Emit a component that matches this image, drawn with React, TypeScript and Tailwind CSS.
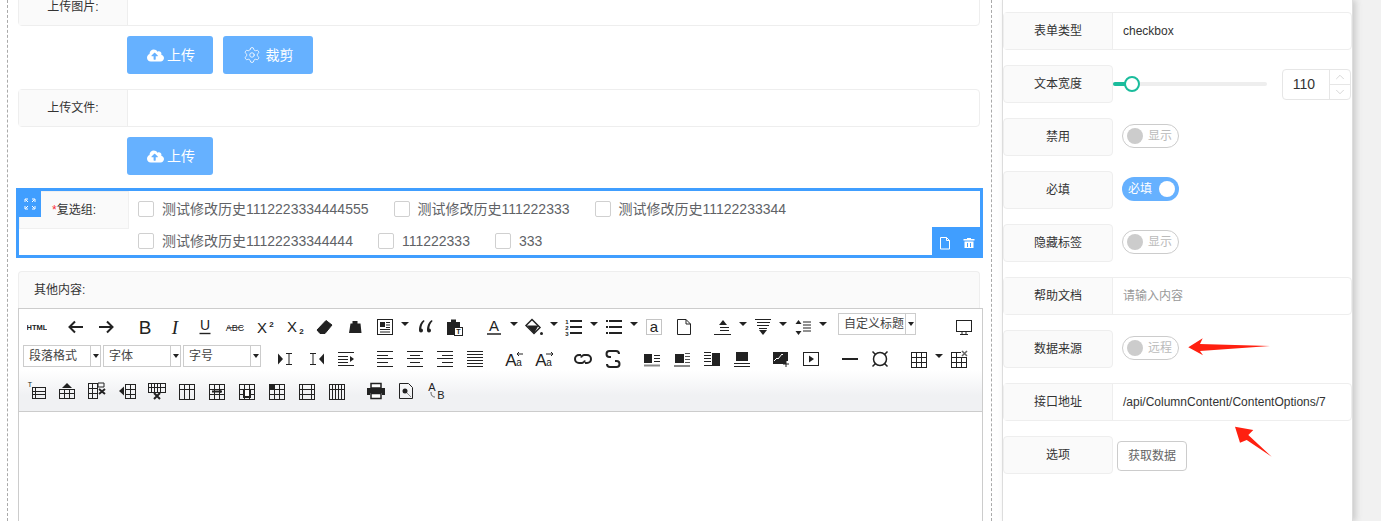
import type { ReactNode } from 'react';
import { FaCloudUploadAlt } from 'react-icons/fa';
import { Settings, ChevronUp, ChevronDown } from 'lucide-react';

const Svg = ({ children }: { children: ReactNode }) => (
  <svg width="20" height="20" viewBox="0 0 20 20" fill="none" stroke="#222" className="block">
    {children}
  </svg>
);

const Txt = ({ x, y, size, children, weight, italic, serif }: { x: number; y: number; size: number; children: ReactNode; weight?: string; italic?: boolean; serif?: boolean }) => (
  <text
    x={x}
    y={y}
    fontSize={size}
    fontWeight={weight}
    fontStyle={italic ? 'italic' : undefined}
    textAnchor="middle"
    fill="#222"
    stroke="none"
    fontFamily={serif ? 'Liberation Serif' : 'Liberation Sans'}
  >
    {children}
  </text>
);

// line stacks used by the align and float icons
const Lines = ({ ys, x1 = 2, x2 = 18, w = 1 }: { ys: number[]; x1?: number; x2?: number; w?: number }) => (
  <path d={ys.map((y) => `M${x1} ${y}H${x2}`).join('')} strokeWidth={w} />
);

const Table = ({ cols = [], rows = [], x = 2, y = 3, w = 15, h = 14 }: { cols?: number[]; rows?: number[]; x?: number; y?: number; w?: number; h?: number }) => (
  <g>
    <rect x={x + 0.5} y={y + 0.5} width={w} height={h} />
    {cols.map((c) => (
      <path key={`c${c}`} d={`M${x + c + 0.5} ${y}v${h + 1}`} />
    ))}
    {rows.map((r) => (
      <path key={`r${r}`} d={`M${x} ${y + r + 0.5}h${w + 1}`} />
    ))}
  </g>
);

const icons: Record<string, ReactNode> = {
  html: <Txt x={10} y={12.5} size={7.5} weight="bold">HTML</Txt>,
  undo: <path d="M17 10H4M9 4.5L3.5 10 9 15.5" strokeWidth="2" />,
  redo: <path d="M3 10h13M11 4.5l5.5 5.5-5.5 5.5" strokeWidth="2" />,
  bold: <Txt x={10} y={16.5} size={19}>B</Txt>,
  italic: <Txt x={10} y={16.5} size={19} italic serif>I</Txt>,
  underline: (
    <>
      <Txt x={10} y={13} size={14}>U</Txt>
      <path d="M4.5 16.5h11" strokeWidth="1.4" />
    </>
  ),
  strike: (
    <>
      <Txt x={10} y={14} size={9}>ABC</Txt>
      <path d="M2 10.5h16" strokeWidth=".7" />
    </>
  ),
  sup: (
    <>
      <Txt x={7} y={16} size={15}>X</Txt>
      <Txt x={16.5} y={10} size={8} weight="bold">2</Txt>
    </>
  ),
  sub: (
    <>
      <Txt x={7} y={15} size={15}>X</Txt>
      <Txt x={16.5} y={17} size={8} weight="bold">2</Txt>
    </>
  ),
  eraser: <path d="M11 3.5l6 4.5-7 8.5H5L2 13z M5.5 9.5l6 4.5" fill="#222" strokeWidth="1" />,
  brush: <path d="M7.500 4h5v2.500h3l1 9.500H4l.5-3 1-6.500h2z" fill="#222" stroke="none" />,
  layout: (
    <>
      <rect x="2.500" y="2.500" width="15" height="15" />
      <path d="M5 5h5v5H5z" fill="#222" stroke="none" />
      <path d="M11 5.500h4M11 8h4M11 10.500h4M5 12.500h10M5 15h10" />
    </>
  ),
  quote: <path d="M9 3C5.500 5 4 9 4 13.500a2 2 0 0 0 4 0c0-1.200-.8-2-1.700-2C6.500 8.500 7.500 6 9.500 4.200zM17 3c-3.500 2-5 6-5 10.500a2 2 0 0 0 4 0c0-1.200-.8-2-1.700-2 .2-3 1.200-5.500 3.200-7.300z" fill="#222" stroke="none" />,
  paste: (
    <>
      <path d="M2 5h4V2.500h5V5h4v6H9v7H2z" fill="#222" stroke="none" />
      <rect x="9.500" y="10.500" width="8" height="8" fill="#fff" />
      <Txt x={13.500} y={17} size={7} weight="bold">T</Txt>
    </>
  ),
  color: (
    <>
      <Txt x={10} y={14} size={15}>A</Txt>
      <path d="M3 17h14" strokeWidth="1.500" />
    </>
  ),
  fill: (
    <>
      <path d="M8 2.500l8 8-6 6-8-8z" stroke="#222" strokeWidth="1.500" fill="#fff" />
      <path d="M3 8.500h11.500L10 16.500z" fill="#222" stroke="none" />
      <circle cx="17.500" cy="16.500" r="1.500" fill="#222" stroke="none" />
    </>
  ),
  ol: (
    <>
      <Txt x={3} y={7} size={6} weight="bold">1</Txt>
      <Txt x={3} y={13} size={6} weight="bold">2</Txt>
      <Txt x={3} y={19} size={6} weight="bold">3</Txt>
      <Lines ys={[4, 10, 16]} x1={6} x2={18} w={2} />
    </>
  ),
  ul: (
    <>
      <path d="M2 4h2M2 10h2M2 16h2" strokeWidth="2" />
      <Lines ys={[4, 10, 16]} x1={5} x2={18} w={2} />
    </>
  ),
  selectall: (
    <>
      <rect x="2.500" y="2.500" width="15" height="15" strokeDasharray="1 1" stroke="#888" fill="#fff" />
      <Txt x={10} y={15} size={15}>a</Txt>
    </>
  ),
  page: <path d="M3.500 2.500h8.500l4.500 4.500v10.500h-13zM12 2.500v4.500h4.500" />,
  spaceBefore: (
    <>
      <path d="M10 3l4 5H6z" fill="#222" stroke="none" />
      <path d="M7 10.500h9M7 13.500h9M1 17.500h17" />
    </>
  ),
  spaceAfter: (
    <>
      <path d="M10 18l-4-5h8z" fill="#222" stroke="none" />
      <path d="M2 2.500h16M4 5.500h13M4 8.500h12M6 11.500h8" />
    </>
  ),
  lineHeight: (
    <>
      <path d="M5.500 3l3 4h-6zM5.500 18l3-4h-6z" fill="#222" stroke="none" />
      <Lines ys={[5, 8, 11, 14]} x1={10} x2={18} />
    </>
  ),
  monitor: (
    <>
      <rect x="2.500" y="3.500" width="15" height="11" />
      <path d="M8 15v2M12 15v2M6 17.500h8" />
    </>
  ),
  indentR: (
    <>
      <path d="M2 4.500l5 5.500-5 5.500z" fill="#222" stroke="none" />
      <path d="M10 4.500h6M10 15.500h6M13 4.500v11" />
    </>
  ),
  indentL: (
    <>
      <path d="M18 4.500L13 10l5 5.500z" fill="#222" stroke="none" />
      <path d="M4 4.500h6M4 15.500h6M7 4.500v11" />
    </>
  ),
  indent: (
    <>
      <path d="M2 3.500h16M2 16.500h16M2 7.500h10M2 10.500h10M2 13.500h10" />
      <path d="M14 7l4 3-4 3z" fill="#222" stroke="none" />
    </>
  ),
  justifyLeft: <path d="M2 2.500h16M2 6.500h11M2 9.500h16M2 13.500h11M2 17.500h16" />,
  justifyCenter: <path d="M2 2.500h16M5 6.500h10M2 9.500h16M5 13.500h10M2 17.500h16" />,
  justifyRight: <path d="M2 2.500h16M7 6.500h11M2 9.500h16M7 13.500h11M2 17.500h16" />,
  justifyAll: <Lines ys={[2.500, 5.500, 8.500, 11.500, 14.500, 17.500]} />,
  ltr: (
    <>
      <Txt x={7} y={17} size={17}>A</Txt>
      <Txt x={15} y={17} size={10}>a</Txt>
      <path d="M19 5h-6M15 3l-2 2 2 2" />
    </>
  ),
  rtl: (
    <>
      <Txt x={7} y={17} size={17}>A</Txt>
      <Txt x={15} y={17} size={10}>a</Txt>
      <path d="M12 5h7M17 3l2 2-2 2" />
    </>
  ),
  link: <path d="M8 6H6a4 4 0 0 0 0 8h3a4 4 0 0 0 3-2.500M12 14h2a4 4 0 0 0 0-8h-3a4 4 0 0 0-3 2.500" strokeWidth="2" />,
  unlink: <path d="M8 8H6.500a3 3 0 0 1 0-6H13a3 3 0 0 1 3 3M12 12h1.500a3 3 0 0 1 0 6H7a3 3 0 0 1-3-3" strokeWidth="2" />,
  floatLeft: (
    <>
      <path d="M2 5h8v9H2z" fill="#222" stroke="none" />
      <path d="M12 6.500h6M12 9.500h6M12 12.500h6" />
      <path d="M2 16.500h16" stroke="#888" strokeWidth="2" />
    </>
  ),
  floatNone: (
    <>
      <path d="M3 5h9v9H3z" fill="#222" stroke="none" />
      <path d="M13 4.500h5M13 7.500h5M13 10.500h5M13 13.500h5" stroke="#555" />
      <path d="M2 17h16" stroke="#888" strokeWidth="2" />
    </>
  ),
  floatRight: (
    <>
      <path d="M10 4h8v12h-8z" fill="#222" stroke="none" />
      <Lines ys={[3.500, 6.500, 9.500, 12.500]} x1={2} x2={9} />
      <path d="M2 16.500h16" />
    </>
  ),
  floatCenter: (
    <>
      <path d="M4 3h12v9H4z" fill="#222" stroke="none" />
      <path d="M2 14.500h16M2 17.500h16" />
    </>
  ),
  image: (
    <>
      <path d="M2 3h15v9h-2v3H2z" fill="#222" stroke="none" />
      <path d="M15 12v6M12 15h6" stroke="#222" />
      <path d="M3 12l3-3 1 1 4-5 1 1" stroke="#fff" />
    </>
  ),
  video: (
    <>
      <rect x="2.500" y="3.500" width="15" height="13" />
      <path d="M8 6.500l5 3.500-5 3.500z" fill="#222" stroke="none" />
    </>
  ),
  hr: <path d="M2 10h16" strokeWidth="2" />,
  spechars: (
    <>
      <circle cx="10" cy="10" r="6.500" strokeWidth="1.500" />
      <path d="M2.500 2.500l3 3M17.500 2.500l-3 3M2.500 17.500l3-3M17.500 17.500l-3-3" strokeWidth="1.500" />
    </>
  ),
  table: <Table x={2} y={3} w={15} h={15} cols={[5, 10]} rows={[5, 10]} />,
  tableDel: (
    <>
      <Table x={2} y={3} w={15} h={15} cols={[5, 10]} rows={[5, 10]} />
      <rect x="12" y="1" width="7" height="7" fill="#fff" stroke="none" />
      <path d="M13 2l5 5M18 2l-5 5" stroke="#666" strokeWidth="1.500" />
    </>
  ),
  tCaption: (
    <>
      <Txt x={3} y={6} size={7}>T</Txt>
      <Table x={5} y={6} w={13} h={11} cols={[3]} rows={[4, 7]} />
    </>
  ),
  tRowAbove: (
    <>
      <path d="M10 2l5 5H5z" fill="#222" stroke="none" />
      <Table x={2} y={8} w={15} h={9} cols={[5, 10]} rows={[4]} />
    </>
  ),
  tRowDel: (
    <>
      <Table x={1} y={2} w={9} h={15} cols={[4]} rows={[5, 10]} />
      <path d="M11 2h6v4h-6z" />
      <path d="M12 8l6 5M18 8l-6 5" strokeWidth="2" />
    </>
  ),
  tColLeft: (
    <>
      <path d="M2 10l5-4.500v9z" fill="#222" stroke="none" />
      <Table x={8} y={3} w={10} h={14} cols={[5]} rows={[5, 10]} />
    </>
  ),
  tColDel: (
    <>
      <Table x={1} y={2} w={6} h={9} rows={[4]} cols={[3]} />
      <Table x={7} y={2} w={6} h={9} rows={[4]} cols={[3]} />
      <Table x={13} y={2} w={5} h={9} rows={[4]} />
      <path d="M7 12l6 6M13 12l-6 6" strokeWidth="2" />
    </>
  ),
  tMergeAll: <Table x={2} y={3} w={15} h={15} cols={[5, 10]} rows={[5]} />,
  tMergeR: (
    <>
      <Table x={2} y={3} w={15} h={15} cols={[5, 10]} rows={[5, 10]} />
      <path d="M5 10.500h10" strokeWidth="2" />
      <path d="M12 8l3 2.500-3 2.500z" fill="#222" stroke="none" />
    </>
  ),
  tMergeD: (
    <>
      <Table x={2} y={3} w={15} h={15} cols={[5, 10]} rows={[5, 10]} />
      <path d="M7 9v7h6V9" strokeWidth="2" fill="#fff" />
    </>
  ),
  tSplit: (
    <>
      <Table x={2} y={3} w={15} h={15} cols={[5, 10]} rows={[5, 10]} />
      <path d="M2 3h5.500v5.500H2z" fill="#222" stroke="none" />
    </>
  ),
  tRows: <Table x={2} y={3} w={15} h={15} cols={[3, 12]} rows={[5, 10]} />,
  tCols: <Table x={2} y={3} w={15} h={15} cols={[3, 6, 9, 12]} rows={[5]} />,
  print: (
    <>
      <path d="M1 7h18v7h-3v-2H4v2H1z" fill="#222" stroke="none" />
      <path d="M5 2.500h10V7H5zM5 12.500h10v5H5z" fill="#fff" strokeWidth="1.500" />
    </>
  ),
  preview: (
    <>
      <path d="M3.500 2.500h9l4 4v11h-13z" />
      <circle cx="9" cy="10" r="2.500" fill="#222" stroke="none" />
      <path d="M11 12l4 4" stroke="#888" />
    </>
  ),
  search: (
    <>
      <Txt x={6} y={10} size={11}>A</Txt>
      <Txt x={15} y={18} size={11}>B</Txt>
      <path d="M5 11c0 4 2 5 4 5" stroke="#555" />
    </>
  ),
};

const row1 = ['html', '|', 'undo', 'redo', '|', 'bold', 'italic', 'underline', 'strike', 'sup', 'sub', 'eraser', 'brush', 'layout+', 'quote', 'paste', '|', 'color+', 'fill+', 'ol+', 'ul+', 'selectall', 'page', '|', 'spaceBefore+', 'spaceAfter+', 'lineHeight+'];
const row2 = ['indentR', 'indentL', 'indent', '|', 'justifyLeft', 'justifyCenter', 'justifyRight', 'justifyAll', '|', 'ltr', 'rtl', '|', 'link', 'unlink', '|', 'floatLeft', 'floatNone', 'floatRight', 'floatCenter', '|', 'image', 'video', '|', 'hr', 'spechars', '|', 'table+', 'tableDel'];
const row3 = ['tCaption', 'tRowAbove', 'tRowDel', 'tColLeft', 'tColDel', 'tMergeAll', 'tMergeR', 'tMergeD', 'tSplit', 'tRows', 'tCols', '|', 'print', 'preview', 'search'];

function ToolItems({ items }: { items: string[] }) {
  return (
    <>
      {items.map((item, i) => {
        if (item === '|') return <span key={i} className="w-[9px] shrink-0" />;
        const hasArrow = item.endsWith('+');
        return (
          <span key={i} className="flex items-center">
            <span className="flex w-[30px] justify-center">
              <Svg>{icons[hasArrow ? item.slice(0, -1) : item]}</Svg>
            </span>
            {hasArrow && (
              <span className="mb-1.5 flex w-[10px] justify-center">
                <span className="h-0 w-0 border-x-[4px] border-t-[4px] border-x-transparent border-t-[#222]" />
              </span>
            )}
          </span>
        );
      })}
    </>
  );
}

function ToolSelect({ label, className }: { label: string; className: string }) {
  return (
    <div className={`mb-1.5 flex h-[22px] shrink-0 items-center border border-[#ccc] bg-white text-xs text-[#444] ${className}`}>
      <span className="flex-1 whitespace-nowrap pl-[5px]">{label}</span>
      <span className="flex h-full w-[10px] items-center justify-center border-l border-[#ccc]">
        <span className="h-0 w-0 border-x-[3.500px] border-t-[4px] border-x-transparent border-t-[#222]" />
      </span>
    </div>
  );
}

function FormRow({ label }: { label: string }) {
  return (
    <div className="flex h-[38px] rounded-sm border border-[#eee]">
      <div className="flex w-[109px] shrink-0 items-center justify-center border-r border-[#eee] bg-[#fafafa] text-xs text-[#333]">
        {label}
      </div>
    </div>
  );
}

function UploadButton({ children }: { children: ReactNode }) {
  return (
    <button className="flex h-[38px] items-center justify-center rounded-[3px] bg-[#66b1ff] text-sm text-white">
      {children}
    </button>
  );
}

function Check({ label }: { label: string }) {
  return (
    <label className="mr-[25px] flex items-center gap-2 whitespace-nowrap text-sm text-[#606266]">
      <span className="h-4 w-4 rounded-[2px] border border-[#d0d0d0] bg-white" />
      {label}
    </label>
  );
}

function PanelRow({ label, children }: { label: string; children?: ReactNode }) {
  return (
    <div className="flex h-[38px]">
      <div className="flex w-[110px] shrink-0 items-center justify-center rounded-sm border border-[#eee] bg-[#fafafa] text-xs text-[#333]">
        {label}
      </div>
      <div className="flex flex-1 items-center pl-[9px]">{children}</div>
    </div>
  );
}

function InputRow({ label, children }: { label: string; children: ReactNode }) {
  return (
    <div className="flex h-[38px] rounded-sm border border-[#eee]">
      <div className="flex w-[109px] shrink-0 items-center justify-center border-r border-[#eee] bg-[#fafafa] text-xs text-[#333]">
        {label}
      </div>
      <div className="flex flex-1 items-center pl-2.5 text-xs">{children}</div>
    </div>
  );
}

function Toggle({ label, on }: { label: string; on?: boolean }) {
  if (on) {
    return (
      <div className="flex h-6 w-[57px] items-center justify-between rounded-full bg-[#66b1ff] pl-1.5 pr-1 text-xs text-white">
        {label}
        <span className="h-4 w-4 rounded-full bg-white" />
      </div>
    );
  }
  return (
    <div className="flex h-6 w-[57px] items-center gap-[5px] rounded-full border border-[#ccc] pl-1 text-xs text-[#bbb]">
      <span className="h-4 w-4 rounded-full bg-[#ccc]" />
      {label}
    </div>
  );
}

export default function App() {
  return (
    <div className="relative flex h-[521px] overflow-hidden bg-[#f1f1f1] font-['Liberation_Sans','Noto_Sans_CJK_SC',sans-serif]">
      <div className="flex w-[1002px] shrink-0 bg-white pl-[7px]">
        <div className="h-full w-[985px] border-x border-dashed border-[#aaa] pl-[10px]">
          <div className="-mt-3 w-[962px]">
            <FormRow label="上传图片:" />
            <div className="mt-2.5 flex gap-2.5 pl-[109px]">
              <UploadButton>
                <span className="flex w-[86px] items-center justify-center gap-[3px] pl-[2px]">
                  <FaCloudUploadAlt size={17} />
                  上传
                </span>
              </UploadButton>
              <UploadButton>
                <span className="flex w-[90px] items-center justify-center gap-[5px]">
                  <Settings size={18} strokeWidth={1.1} />
                  裁剪
                </span>
              </UploadButton>
            </div>
            <div className="mt-[15px]">
              <FormRow label="上传文件:" />
            </div>
            <div className="mt-2.5 flex pl-[109px]">
              <UploadButton>
                <span className="flex w-[86px] items-center justify-center gap-[3px] pl-[2px]">
                  <FaCloudUploadAlt size={17} />
                  上传
                </span>
              </UploadButton>
            </div>
          </div>

          <div className="relative -ml-0.5 mt-[13px] flex h-[70px] w-[967px] border-[3px] border-[#409eff]">
            <div className="flex h-[38px] w-[110px] shrink-0 items-center justify-center border border-[#f0f0f0] bg-[#fafafa] text-xs text-[#333]">
              <span className="text-red-500">*</span>复选组:
            </div>
            <div className="flex flex-col pl-[9px]">
              <div className="flex h-[36px] items-center">
                <Check label="测试修改历史1112223334444555" />
                <Check label="测试修改历史111222333" />
                <Check label="测试修改历史11122233344" />
              </div>
              <div className="flex h-[28px] items-center">
                <Check label="测试修改历史11122233344444" />
                <Check label="111222333" />
                <Check label="333" />
              </div>
            </div>
            <span className="absolute left-0 top-0 flex h-[26px] w-[22px] items-center justify-center bg-[#409eff]">
              <svg width="12" height="12" viewBox="0 0 12 12" fill="none" stroke="#fff">
                <path d="M1 4V1h3M8 1h3v3M11 8v3H8M4 11H1V8M1.500 1.500l2.500 2.500M10.500 1.500L8 4M10.500 10.500L8 8M1.500 10.500L4 8" />
              </svg>
            </span>
            <span className="absolute -bottom-[3px] -right-[3px] flex h-[31px] w-[51px] items-center gap-[11px] bg-[#409eff] pl-[6px]">
              <svg width="14" height="14" viewBox="0 0 14 14" fill="none" stroke="#fff">
                <path d="M2.500 1.500h6l3 3v8.500h-9zM8.500 1.500v3h3" />
              </svg>
              <svg width="12" height="12" viewBox="0 0 12 12" fill="#fff">
                <path d="M4 1h4v1h3.500v1.500h-11V2H4zM1.500 4.500h9V11h-9zM4 6v4h1V6zm3 0v4h1V6z" fillRule="evenodd" />
              </svg>
            </span>
          </div>

          <div className="mt-[13px] w-[965px]">
            <div className="flex h-[37px] w-[962px] items-center rounded-t-sm border border-b-0 border-[#eee] bg-[#fafafa] pl-[15px] text-xs text-[#333]">
              其他内容:
            </div>
            <div className="h-[300px] border border-[#ccc] bg-white">
              <div className="border-b border-[#ccc] bg-linear-to-b from-white from-60% to-[#f0f1f3] to-85% pb-[4px] pl-[3px] pt-[2px]">
                <div className="flex h-8 items-center">
                  <ToolItems items={row1} />
                  <ToolSelect label="自定义标题" className="ml-2.5 w-[78px]" />
                  <span className="ml-[33px] flex w-[30px] justify-center">
                    <Svg>{icons.monitor}</Svg>
                  </span>
                </div>
                <div className="flex h-8 items-center">
                  <div className="ml-px flex gap-0.5">
                    <ToolSelect label="段落格式" className="w-[78px]" />
                    <ToolSelect label="字体" className="w-[78px]" />
                    <ToolSelect label="字号" className="w-[78px]" />
                  </div>
                  <span className="w-[10px] shrink-0" />
                  <ToolItems items={row2} />
                </div>
                <div className="flex h-8 items-center">
                  <ToolItems items={row3} />
                </div>
              </div>
            </div>
          </div>
        </div>
      </div>

      <div className="relative h-full w-[351px] shrink-0 border-x border-[#ddd] bg-white shadow-[3px_0_6px_#ccc]">
        <div className="flex flex-col gap-[15px] pt-3">
          <InputRow label="表单类型">
            <span className="text-[#333]">checkbox</span>
          </InputRow>
          <PanelRow label="文本宽度">
            <div className="-ml-[9px] flex w-[239px] shrink-0 items-center">
              <div className="relative h-1 w-[154px] shrink-0 rounded-full bg-[#eee]">
                <div className="h-1 w-[19px] rounded-l-full bg-[#1abc9c]" />
                <span className="absolute -top-1.5 left-[11px] h-4 w-4 rounded-full border-2 border-[#1abc9c] bg-white" />
              </div>
              <div className="ml-[15px] flex h-[31px] w-[69px] shrink-0 items-center rounded-sm border border-[#e6e6e6] text-sm text-[#333]">
                <span className="flex-1 pr-1 text-center">110</span>
                <span className="flex h-full w-[21px] flex-col border-l border-[#e6e6e6] text-[#bbb]">
                  <span className="flex flex-1 items-center justify-center border-b border-[#e6e6e6]">
                    <ChevronUp size={14} strokeWidth={1} />
                  </span>
                  <span className="flex flex-1 items-center justify-center">
                    <ChevronDown size={14} strokeWidth={1} />
                  </span>
                </span>
              </div>
            </div>
          </PanelRow>
          <PanelRow label="禁用">
            <div className="-mt-[3px]"><Toggle label="显示" /></div>
          </PanelRow>
          <PanelRow label="必填">
            <div className="-mt-[3px]"><Toggle label="必填" on /></div>
          </PanelRow>
          <PanelRow label="隐藏标签">
            <div className="-mt-[3px]"><Toggle label="显示" /></div>
          </PanelRow>
          <InputRow label="帮助文档">
            <span className="text-[#999]">请输入内容</span>
          </InputRow>
          <PanelRow label="数据来源">
            <div className="-mt-[3px]"><Toggle label="远程" /></div>
          </PanelRow>
          <InputRow label="接口地址">
            <span className="text-[#333]">/api/ColumnContent/ContentOptions/7</span>
          </InputRow>
          <div className="flex">
            <div className="flex h-[38px] w-[110px] shrink-0 items-center justify-center rounded-sm border border-[#eee] bg-[#fafafa] text-xs text-[#333]">
              选项
            </div>
            <button className="ml-1 mt-[5px] h-[30px] w-[70px] rounded-sm border border-[#ccc] bg-white text-xs text-[#666]">
              获取数据
            </button>
          </div>
        </div>

        <svg className="absolute left-[180px] top-[334px]" width="90" height="26" viewBox="0 0 90 26" fill="#ff2010">
          <path d="M5.300 13.300L19.700 4.300 17 10l70 2-70 5 3 4.300z" />
        </svg>
        <svg className="absolute left-[230px] top-[424px]" width="44" height="36" viewBox="0 0 44 36" fill="#ff2010">
          <path d="M2 2.700L20.300 6l-5 5 23.400 21.700L13.700 16 7 18.700z" />
        </svg>
      </div>
    </div>
  );
}
